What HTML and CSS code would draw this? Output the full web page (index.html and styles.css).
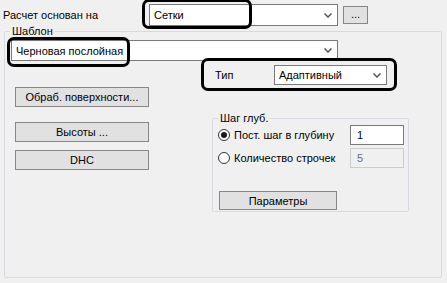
FILE: index.html
```html
<!DOCTYPE html>
<html lang="ru">
<head>
  <meta charset="UTF-8" />
  <title>Расчет</title>
  <link rel="stylesheet" href="styles.css">
</head>
<body>
  <div class="top-row">
    <span class="top-label">Расчет основан на</span>
    <div class="combo combo-base">
      <span>Сетки</span>
      <svg class="chev" width="8" height="5" viewBox="0 0 8 5"><polyline points="0.5,0.5 4,4 7.5,0.5" fill="none" stroke="#555" stroke-width="1.5"/></svg>
    </div>
    <button class="btn btn-dots">...</button>
  </div>

  <fieldset class="group main-group">
    <legend>Шаблон</legend>
    <div class="combo combo-tpl">
      <span>Черновая послойная</span>
      <svg class="chev" width="8" height="5" viewBox="0 0 8 5"><polyline points="0.5,0.5 4,4 7.5,0.5" fill="none" stroke="#555" stroke-width="1.5"/></svg>
    </div>

    <div class="body-row">
      <div class="left-col">
        <button class="btn btn-wide btn-surf">Обраб. поверхности...</button>
        <button class="btn btn-wide btn-heights">Высоты ...</button>
        <button class="btn btn-wide btn-dhc">DHC</button>
      </div>

      <div class="right-col">
        <div class="type-row">
          <span class="type-label">Тип</span>
          <div class="combo combo-type">
            <span>Адаптивный</span>
            <svg class="chev" width="8" height="5" viewBox="0 0 8 5"><polyline points="0.5,0.5 4,4 7.5,0.5" fill="none" stroke="#555" stroke-width="1.5"/></svg>
          </div>
        </div>

        <fieldset class="group step-group">
          <legend>Шаг глуб.</legend>
          <div class="step-row">
            <span class="radio checked"></span>
            <span class="step-label">Пост. шаг в глубину</span>
            <div class="field">1</div>
          </div>
          <div class="step-row row-count">
            <span class="radio"></span>
            <span class="step-label">Количество строчек</span>
            <div class="field disabled">5</div>
          </div>
          <button class="btn btn-params">Параметры</button>
        </fieldset>
      </div>
    </div>
  </fieldset>

  <!-- annotation frames drawn over the dialog -->
  <div class="mark mark-base"></div>
  <div class="mark mark-tpl"></div>
  <div class="mark mark-type"></div>
</body>
</html>
```

FILE: styles.css
```css
body {
  margin: 0;
  background: #f0f0f0;
  font-family: 'Liberation Sans', Arial, sans-serif;
  font-size: 11px;
  color: #000;
  position: relative;
  width: 447px;
  height: 283px;
  overflow: hidden;
}
.top-row {
  display: flex;
  align-items: center;
  padding: 4px 0 0 3px;
  height: 22px;
}
.top-label {
  width: 146px;
}
.combo {
  box-sizing: border-box;
  display: flex;
  align-items: center;
  justify-content: space-between;
  background: #fff;
  border: 1px solid #7a7a7a;
  padding: 0 5px 0 4px;
}
.chev {
  display: block;
}
.combo-base {
  width: 189px;
  height: 22px;
}
.btn {
  box-sizing: border-box;
  font-family: inherit;
  font-size: 11px;
  background: #e1e1e1;
  border: 1px solid #878787;
  color: #000;
  padding: 0;
  margin: 0;
}
.btn-dots {
  width: 25px;
  height: 18px;
  margin-left: 5px;
  line-height: 10px;
  padding-bottom: 2px;
}
.group {
  border: 1px solid #d5dbe0;
  border-radius: 2px;
  margin: 0;
  padding: 0;
  box-sizing: border-box;
}
.group > legend {
  padding: 0 2px;
  margin-left: 5px;
  line-height: 14px;
}
.main-group {
  width: 438px;
  height: 254px;
  margin: -2px 0 0 4px;
}
.combo-tpl {
  width: 327px;
  height: 21px;
  margin: 2px 0 0 6px;
}
.body-row {
  display: flex;
  margin-top: 4px;
}
.left-col {
  display: flex;
  flex-direction: column;
  width: 134px;
  margin-left: 10px;
  padding-top: 22px;
}
.btn-wide {
  width: 134px;
  height: 20px;
}
.btn-heights {
  margin-top: 15px;
}
.btn-dhc {
  margin-top: 8px;
}
.right-col {
  margin-left: 63px;
}
.type-row {
  display: flex;
  align-items: center;
  height: 20px;
  padding-left: 3px;
}
.type-label {
  width: 59px;
}
.combo-type {
  width: 113px;
  height: 20px;
}
.step-group {
  width: 197px;
  height: 101px;
  margin-top: 26px;
}
.step-row {
  display: flex;
  align-items: center;
}
.row-count {
  margin-top: 3px;
}
.radio {
  box-sizing: border-box;
  width: 12px;
  height: 12px;
  border: 1px solid #333;
  border-radius: 50%;
  background: #fff;
  margin-left: 5px;
  display: flex;
  align-items: center;
  justify-content: center;
}
.radio.checked::after {
  content: '';
  width: 6px;
  height: 6px;
  border-radius: 50%;
  background: #1a1a1a;
}
.step-label {
  width: 116px;
  margin-left: 4px;
}
.field {
  box-sizing: border-box;
  width: 54px;
  height: 20px;
  border: 1px solid #7a7a7a;
  background: #fff;
  padding: 0 0 0 6px;
  display: flex;
  align-items: center;
}
.field.disabled {
  border-color: #cccccc;
  background: #f0f0f0;
  color: #6d6d6d;
}
.btn-params {
  display: block;
  width: 118px;
  height: 19px;
  margin: 23px 0 0 6px;
}
.mark {
  position: absolute;
  box-sizing: border-box;
  border: 3px solid #000;
  border-radius: 7px;
}
.mark-base {
  left: 142px;
  top: -1px;
  width: 110px;
  height: 30px;
}
.mark-tpl {
  left: 7px;
  top: 37px;
  width: 123px;
  height: 30px;
}
.mark-type {
  left: 201px;
  top: 58px;
  width: 196px;
  height: 33px;
}
```
